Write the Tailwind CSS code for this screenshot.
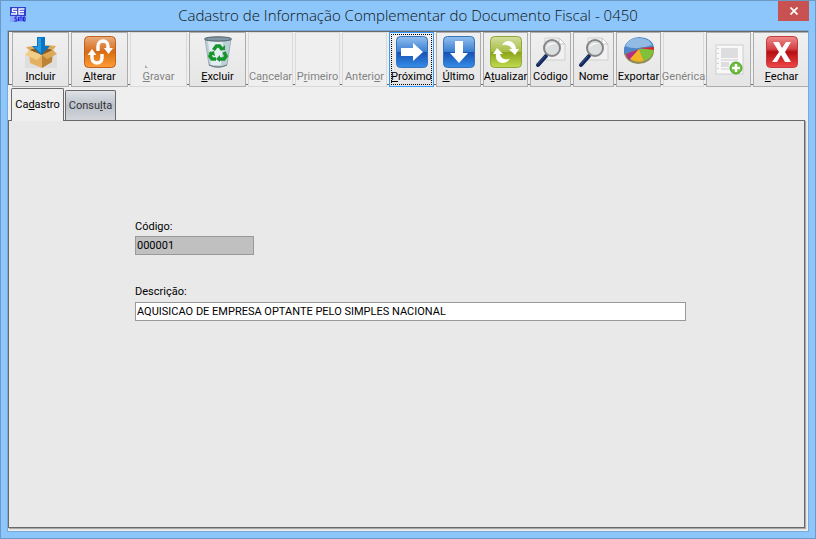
<!DOCTYPE html>
<html lang="pt-BR">
  <head>
    <meta charset="UTF-8" />
    <meta name="viewport" content="width=device-width, initial-scale=1.0" />
    <title>Cadastro de Informação Complementar do Documento Fiscal - 0450</title>
    <script src="https://cdn.jsdelivr.net/npm/@tailwindcss/browser@4"></script>
  </head>
  <body class="font-[Roboto,sans-serif] text-[11px] leading-4 text-black">
    <div class="flex flex-col min-h-screen bg-[#8cc6fa] border border-[#6b9ac6] px-[6px] pb-[6px]">
      <!-- title bar -->
      <header class="flex items-start h-[29px]">
        <svg class="w-[16px] h-[16px] mt-[6px] ml-[3px] mr-3 shrink-0" viewBox="0 0 16 16">
          <rect width="16" height="9" fill="#3040cc" />
          <path d="M7 2H2.500v2.500H6.500V7H1M14.500 2H9v5h5M9 4.500h5" fill="none" stroke="#fff" stroke-width="1.300" />
          <rect y="9" width="16" height="6" fill="#8ba8fa" />
          <path d="M7 10H5v2h2v2H4M8.500 10v4M10 14v-4h2v4M13.500 10H15v4h-1.500z" fill="none" stroke="#1c22d8" />
        </svg>
        <h1 class="grow text-center text-[15px] leading-[28px] font-light font-['Open_Sans',sans-serif] text-[#111] whitespace-nowrap">
          Cadastro de Informação Complementar do Documento Fiscal - 0450
        </h1>
        <button aria-label="Fechar janela" class="flex items-center justify-center w-[31px] h-[20px] shrink-0 bg-[#c85151]">
          <svg class="w-[8px] h-[8px]" viewBox="0 0 8 8"><path d="M.5.5l7 7M7.500.5l-7 7" stroke="#fff" stroke-width="1.700" /></svg>
        </button>
      </header>

      <main class="flex flex-col grow bg-[#efefef] border border-[#79a9d8] overflow-hidden">
        <!-- toolbar -->
        <div class="flex gap-[2px] h-[54px] mb-[3px] pl-[3px] border-t border-b border-l border-[#696969]">
          <button class="flex flex-col items-center w-[57px] h-[55px] shrink-0 pt-[3px] border border-[#adadad] bg-linear-to-b from-[#f0f0f0] to-[#e5e5e5]">
            <svg class="w-[32px] h-[32px]" viewBox="0 0 32 32">
              <path d="M0 19h32v13H0z" fill="#dedede" />
              <path d="M4 14l12-4 12 4-11 6z" fill="#8d5b20" />
              <path d="M4 14l13 5v13L5 27z" fill="#e3b15f" />
              <path d="M17 19l11-5-1 12-10 6z" fill="#bd8437" />
              <path d="M4 14l-4 5 12 5 5-5z" fill="#f1cf88" />
              <path d="M28 14l4 4-10 5-5-4zM4 14L1 11l9-1 4 1zM28 14l3-4-10-1-4 1z" fill="#dda956" />
              <path d="M12 1h8v9h5l-9 9-9-9h5z" fill="#0876c6" />
              <path d="M13 2h3v15l-7-6h4z" fill="#2b9be0" />
            </svg>
            <span class="mt-[1px]"><u>I</u>ncluir</span>
          </button>
          <button class="flex flex-col items-center w-[57px] h-[55px] shrink-0 pt-[3px] border border-[#adadad] bg-linear-to-b from-[#f0f0f0] to-[#e5e5e5]">
            <svg class="w-[32px] h-[32px]" viewBox="0 0 32 32">
              <defs>
                <linearGradient id="orange" x2="0" y2="1">
                  <stop stop-color="#e9ad7d" /><stop offset=".5" stop-color="#d66918" /><stop offset=".55" stop-color="#dc7413" /><stop offset="1" stop-color="#ff9c38" />
                </linearGradient>
              </defs>
              <rect x=".5" y=".5" width="31" height="31" rx="4" fill="url(#orange)" stroke="#bd6021" />
              <path d="M8 18v4a5 5 0 0 0 10 0v-4M14 15v-5a5 5 0 0 1 10 0v3" fill="none" stroke="#fff" stroke-width="3.400" />
              <path d="M3.500 19L8 13l4.500 6zM20 12h9l-4.500 6z" fill="#fff" />
            </svg>
            <span class="mt-[1px]"><u>A</u>lterar</span>
          </button>
          <button disabled class="flex flex-col items-center w-[57px] h-[55px] shrink-0 pt-[3px] border border-[#d9d9d9] bg-[#efefef] text-[#838383]">
            <svg class="w-[32px] h-[32px]" viewBox="0 0 32 32"><path d="M2 29v3h3z" fill="#aaa" /></svg>
            <span class="mt-[1px]"><u>G</u>ravar</span>
          </button>
          <button class="flex flex-col items-center w-[57px] h-[55px] shrink-0 pt-[3px] border border-[#adadad] bg-linear-to-b from-[#f0f0f0] to-[#e5e5e5]">
            <svg class="w-[32px] h-[32px]" viewBox="0 0 32 32">
              <path d="M3 3h26l-4 26q-9 5-18 0z" fill="#bdcfd7" stroke="#879da6" stroke-width=".7" />
              <path d="M6 5h15l-2 24H9z" fill="#e4eef2" />
              <ellipse cx="16" cy="3" rx="13.500" ry="2.200" fill="#8196a2" stroke="#4d6069" />
              <g fill="none" stroke="#15952c" stroke-width="3.600">
                <path d="M11.500 14l3-4h3l3 4M22 16l2 4-2 3h-4M14 23h-4l-2-3 2-4" />
              </g>
              <path d="M18 14h5v-5zM18 19v7l-4-3zM6 17l6-2 1 5z" fill="#15952c" />
              <path d="M7 29q9 4 18 0" fill="none" stroke="#66777d" />
            </svg>
            <span class="mt-[1px]"><u>E</u>xcluir</span>
          </button>
          <button disabled class="flex flex-col items-center justify-end w-[45px] h-[55px] shrink-0 pb-px border border-[#d9d9d9] bg-[#efefef] text-[#838383]">
            <span>Ca<u>n</u>celar</span>
          </button>
          <button disabled class="flex flex-col items-center justify-end w-[45px] h-[55px] shrink-0 pb-px border border-[#d9d9d9] bg-[#efefef] text-[#838383]">
            <span>P<u>r</u>imeiro</span>
          </button>
          <button disabled class="flex flex-col items-center justify-end w-[45px] h-[55px] shrink-0 pb-px border border-[#d9d9d9] bg-[#efefef] text-[#838383]">
            <span>Anteri<u>o</u>r</span>
          </button>
          <button class="flex flex-col items-center w-[45px] h-[55px] shrink-0 pt-[3px] border border-[#3399ff] outline-1 outline-dotted outline-black -outline-offset-3 bg-linear-to-b from-[#f0f0f0] to-[#e5e5e5]">
            <svg class="w-[32px] h-[32px]" viewBox="0 0 32 32">
              <defs>
                <linearGradient id="blue" x2="0" y2="1">
                  <stop stop-color="#94c0ef" /><stop offset=".49" stop-color="#397ed2" /><stop offset=".51" stop-color="#1651b3" /><stop offset="1" stop-color="#368ee9" />
                </linearGradient>
              </defs>
              <rect x=".5" y=".5" width="31" height="31" rx="4" fill="url(#blue)" stroke="#3772b8" />
              <path d="M5 12h12V7l10 9-10 9v-5H5z" fill="#fff" />
            </svg>
            <span class="mt-[1px]"><u>P</u>róximo</span>
          </button>
          <button class="flex flex-col items-center w-[45px] h-[55px] shrink-0 pt-[3px] border border-[#adadad] bg-linear-to-b from-[#f0f0f0] to-[#e5e5e5]">
            <svg class="w-[32px] h-[32px]" viewBox="0 0 32 32">
              <rect x=".5" y=".5" width="31" height="31" rx="4" fill="url(#blue)" stroke="#3772b8" />
              <path d="M12 5h8v12h5l-9 10-9-10h5z" fill="#fff" />
            </svg>
            <span class="mt-[1px]"><u>Ú</u>ltimo</span>
          </button>
          <button class="flex flex-col items-center w-[45px] h-[55px] shrink-0 pt-[3px] border border-[#adadad] bg-linear-to-b from-[#f0f0f0] to-[#e5e5e5]">
            <svg class="w-[32px] h-[32px]" viewBox="0 0 32 32">
              <defs>
                <linearGradient id="green" x2="0" y2="1">
                  <stop stop-color="#d3df9e" /><stop offset=".49" stop-color="#a7bd45" /><stop offset=".51" stop-color="#8aa51a" /><stop offset="1" stop-color="#c1dc50" />
                </linearGradient>
              </defs>
              <rect x=".5" y=".5" width="31" height="31" rx="4" fill="url(#green)" stroke="#91a638" />
              <path d="M12 9q4-6 10-3 4 3 4 7h3l-4 6-6-6h3q-2-5-10-4z" fill="#fff" />
              <path d="M20 23q-5 6-11 3-4-3-3-8H3l4-6 6 6h-3q1 7 10 5z" fill="#fff" />
            </svg>
            <span class="mt-[1px]">A<u>t</u>ualizar</span>
          </button>
          <button class="flex flex-col items-center w-[41px] h-[55px] shrink-0 pt-[3px] border border-[#adadad] bg-linear-to-b from-[#f0f0f0] to-[#e5e5e5]">
            <svg class="w-[32px] h-[32px]" viewBox="0 0 32 32">
              <defs>
                <g id="lupa">
                  <path d="M10 2h14l6 6v16H10z" fill="#f1f1f1" stroke="#cfcfcf" />
                  <path d="M24 2v6h6z" fill="#fff" stroke="#c5c5c5" />
                  <path d="M11 20L3 29" stroke="#14285c" stroke-width="4" stroke-linecap="round" />
                  <path d="M10 20l-7 8" stroke="#315992" stroke-linecap="round" />
                  <circle cx="17" cy="12" r="8" fill="#dcdfe0" stroke="#858585" stroke-width="2" />
                  <path d="M11 12q3-7 11-4-6-1-11 4z" fill="#fff" />
                </g>
              </defs>
              <use href="#lupa" />
            </svg>
            <span class="mt-[1px]">Código</span>
          </button>
          <button class="flex flex-col items-center w-[41px] h-[55px] shrink-0 pt-[3px] border border-[#adadad] bg-linear-to-b from-[#f0f0f0] to-[#e5e5e5]">
            <svg class="w-[32px] h-[32px]" viewBox="0 0 32 32"><use href="#lupa" /></svg>
            <span class="mt-[1px]">Nome</span>
          </button>
          <button class="flex flex-col items-center w-[45px] h-[55px] shrink-0 pt-[3px] border border-[#adadad] bg-linear-to-b from-[#f0f0f0] to-[#e5e5e5]">
            <svg class="w-[32px] h-[32px]" viewBox="0 0 32 32">
              <path d="M1 13v5q3 9 14 10 14-1 16-12v-4z" fill="#8d8d55" />
              <path d="M16 13L1 18V12Q4 2 16 1q14 1 15 11z" fill="#4d86ca" />
              <path d="M2 10Q7 1 17 2q10 1 12 7-15 6-27 1z" fill="#91bbe5" />
              <path d="M16 13L3 18q1 5 4 6z" fill="#b62d83" />
              <path d="M16 13L7 23q6 4 14 2z" fill="#f3b327" />
              <path d="M16 13l5 12q9-3 10-12z" fill="#7fc23a" />
              <path d="M16 12l15-1v3z" fill="#da2626" />
            </svg>
            <span class="mt-[1px]">Exportar</span>
          </button>
          <button disabled class="flex flex-col items-center justify-end w-[41px] h-[55px] shrink-0 pb-px border border-[#d9d9d9] bg-[#efefef] text-[#838383]">
            <span>Genérica</span>
          </button>
          <button aria-label="Adicionar" class="flex items-center justify-center w-[45px] h-[55px] shrink-0 border border-[#adadad] bg-linear-to-b from-[#f0f0f0] to-[#e5e5e5]">
            <svg class="w-[32px] h-[32px]" viewBox="0 0 32 32">
              <rect x="3" y="1" width="27" height="29" fill="#f8f8f8" stroke="#cecece" />
              <path d="M8 4h17v10H8zM8 18h8v5H8z" fill="#dddddf" />
              <path d="M8 16h17M8 25h8M19 19h7" stroke="#ccc" />
              <path d="M5 4v1M5 9v1M5 14v1M5 19v1M5 24v1" stroke="#aaa" />
              <circle cx="23" cy="24" r="6" fill="#6cbf3a" stroke="#55a030" />
              <path d="M23 20v8M19 24h8" stroke="#fff" stroke-width="2.400" />
            </svg>
          </button>
          <button class="flex flex-col items-center w-[57px] h-[55px] shrink-0 pt-[3px] border border-[#adadad] bg-linear-to-b from-[#f0f0f0] to-[#e5e5e5]">
            <svg class="w-[32px] h-[32px]" viewBox="0 0 32 32">
              <defs>
                <linearGradient id="red" x2="0" y2="1">
                  <stop stop-color="#ee8b8b" /><stop offset=".4" stop-color="#d44246" /><stop offset=".5" stop-color="#b60d12" /><stop offset="1" stop-color="#f04848" />
                </linearGradient>
              </defs>
              <rect x=".5" y=".5" width="31" height="31" rx="4" fill="url(#red)" stroke="#c3393c" />
              <path d="M7 6h6l3 6 4-6h5l-6 10 6 10h-6l-4-7-4 7H6l7-10z" fill="#fff" />
            </svg>
            <span class="mt-[1px]"><u>F</u>echar</span>
          </button>
        </div>

        <!-- tabs -->
        <div role="tablist" class="flex items-end gap-px h-[32px] pl-[3px]">
          <button role="tab" aria-selected="true" class="relative -mb-px w-[53px] h-[33px] rounded-t-xs border border-b-0 border-[#696969] bg-[#efefef]">Ca<u>d</u>astro</button>
          <button role="tab" aria-selected="false" class="w-[51px] h-[30px] rounded-t-xs border border-b-0 border-[#696969] bg-linear-to-b from-[#dfe2e7] via-[#bcc2cc] to-[#d3d5d9] text-[#333]">Consu<u>l</u>ta</button>
        </div>

        <form class="flex flex-col grow items-start mr-[3px] mb-[3px] pl-[126px] pr-[118px] pt-[98px] border border-[#696969] bg-[#e9e9e9] shadow-[1px_1px_1px_#aaa]">
          <label for="codigo">Código:</label>
          <input id="codigo" type="text" value="000001" readonly class="w-[119px] h-[19px] mt-px px-px pb-px border border-[#999] bg-[#c0c0c0]" />
          <label for="descricao" class="mt-[29px]">Descrição:</label>
          <input id="descricao" type="text" value="AQUISICAO DE EMPRESA OPTANTE PELO SIMPLES NACIONAL" class="w-full h-[19px] mt-[2px] px-px pb-px border border-[#999] bg-white" />
        </form>
      </main>
    </div>
  </body>
</html>
